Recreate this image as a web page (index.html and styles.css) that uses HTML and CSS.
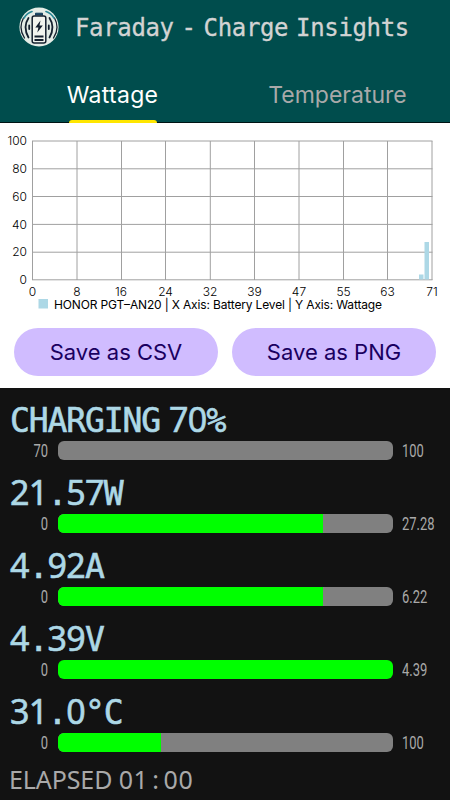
FILE: index.html
```html
<!DOCTYPE html>
<html lang="en">
<head>
<meta charset="utf-8">
<title>Faraday - Charge Insights</title>
<link rel="stylesheet" href="styles.css">
</head>
<body>
<header class="header">
  <div class="brand">
    <svg class="logo" viewBox="0 0 40 40">
      <circle cx="20" cy="20" r="19.6" fill="#e4ece6"/>
      <g fill="none" stroke="#14202e" stroke-width="1.3" stroke-linecap="round">
        <path d="M9.500 11Q3.500 20 9.500 30.500" stroke-width="1.800"/>
        <path d="M30.500 11Q36.500 20 30.500 30.500" stroke-width="1.800"/>
        <path d="M4.500 11Q-1 21 5.500 31"/>
        <path d="M35.500 11Q41 21 34.500 31"/>
        <path d="M10.200 18.500V22M29.800 18.500V22" stroke-width="1.800"/>
        <path d="M5 11Q8 6 13 4.500M35 11Q32 6 27 4.500" stroke="#2b8996" stroke-width="1.700"/>
      </g>
      <path d="M16.500 8.500V6.200H23.500V8.500" fill="#16405e" stroke="#16405e"/>
      <rect x="13.200" y="9" width="13.600" height="27" rx="2" fill="#f2f4ee" stroke="#14202e" stroke-width="1.500"/>
      <path d="M21.500 13.500L16.300 20.500H19.400L18.300 25.500L23.800 18.600H20.500Z" fill="#14202e"/>
      <path d="M15.500 29.500H24.500M15.500 33H24.500" stroke="#14202e" stroke-width="1.800"/>
    </svg>
    <h1 class="title">Faraday - Charge Insights</h1>
  </div>
  <nav class="tabs">
    <div class="tab active"><span>Wattage</span></div>
    <div class="tab temp"><span>Temperature</span></div>
  </nav>
</header>
<main class="panel">
  <svg class="chart" viewBox="0 0 450 192">
    <g class="grid">
      <path d="M32 18H432.500M32 45.800H432.500M32 73.500H432.500M32 101.400H432.500M32 129.200H432.500M32 156.800H432.500"/>
      <path d="M32.500 18V157M77 18V157M121.500 18V157M165.500 18V157M210.300 18V157M254.500 18V157M299 18V157M343.500 18V157M387.500 18V157M432 18V157"/>
    </g>
    <path class="series" d="M419 151.500h4.500v5h-4.500zM424.500 119h4.500v37.500h-4.500z"/>
    <g class="labels yaxis">
      <text x="27" y="22">100</text><text x="27" y="50">80</text><text x="27" y="77.500">60</text>
      <text x="27" y="105.500">40</text><text x="27" y="133">20</text><text x="27" y="161">0</text>
    </g>
    <g class="labels xaxis">
      <text x="32.500" y="172.500">0</text><text x="77" y="172.500">8</text><text x="121" y="172.500">16</text>
      <text x="165.500" y="172.500">24</text><text x="210" y="172.500">32</text><text x="254.500" y="172.500">39</text>
      <text x="299" y="172.500">47</text><text x="343.500" y="172.500">55</text><text x="387.500" y="172.500">63</text>
      <text x="432" y="172.500">71</text>
    </g>
    <rect class="series" x="38.500" y="176" width="9.500" height="9.500"/>
    <text class="labels legend" x="54" y="185.500" textLength="328">HONOR PGT–AN20 | X Axis: Battery Level | Y Axis: Wattage</text>
  </svg>
  <div class="actions">
    <button class="btn"><span>Save as CSV</span></button>
    <button class="btn"><span>Save as PNG</span></button>
  </div>
</main>
<section class="stats">
  <div class="stat">
    <h2 class="value"><span class="word">CHARGING</span> <span class="num">70</span>%</h2>
    <div class="meter"><span class="min">70</span><div class="track"></div><span class="max">100</span></div>
  </div>
  <div class="stat">
    <h2 class="value"><span class="num">21</span>.<span class="num">57</span>W</h2>
    <div class="meter"><span class="min">0</span><div class="track"><div class="fill" style="width:79.2%"></div></div><span class="max">27.28</span></div>
  </div>
  <div class="stat">
    <h2 class="value"><span class="num">4</span>.<span class="num">92</span>A</h2>
    <div class="meter"><span class="min">0</span><div class="track"><div class="fill" style="width:79.2%"></div></div><span class="max">6.22</span></div>
  </div>
  <div class="stat">
    <h2 class="value"><span class="num">4</span>.<span class="num">39</span>V</h2>
    <div class="meter"><span class="min">0</span><div class="track"><div class="fill" style="width:100%"></div></div><span class="max">4.39</span></div>
  </div>
  <div class="stat">
    <h2 class="value"><span class="num">31</span>.<span class="num">0</span>°C</h2>
    <div class="meter"><span class="min">0</span><div class="track"><div class="fill" style="width:31%"></div></div><span class="max">100</span></div>
  </div>
  <p class="elapsed">ELAPSED <span class="clock">01<span class="colon">:</span>00</span></p>
</section>
</body>
</html>
```

FILE: styles.css
```css
* { box-sizing: border-box; margin: 0; }
body { width: 450px; height: 800px; overflow: hidden; background: #121212; font-family: Inter, sans-serif; }
.header { height: 123px; background: #004d4d; border-bottom: 1px solid #001414; display: flex; flex-direction: column; justify-content: space-between; }
.brand { display: flex; align-items: center; height: 54px; padding-left: 18.5px; gap: 16.5px; }
.logo { width: 40px; height: 40px; }
.title { font: 400 24px/30px "DejaVu Sans Mono", monospace; letter-spacing: -0.35px; word-spacing: -6.2px; color: #d3d3d3; white-space: pre; padding-top: 2px; -webkit-text-stroke: .3px #d3d3d3; }
.tabs { display: grid; grid-template-columns: 1fr 1fr; height: 55px; font-size: 23px; line-height: 56px; text-align: center; }
.tab { color: #a9a9a9; }
.tab.active { color: #fff; display: flex; flex-direction: column; align-items: center; justify-content: space-between; letter-spacing: .3px; }
.tab.active span { height: 50px; }
.tab.active::after { content: ""; width: 88px; height: 3.5px; background: #ffe600; border-radius: 3px 3px 0 0; }
.panel { height: 265px; background: #fff; }
.chart { display: block; width: 450px; height: 192px; }
.grid { fill: none; stroke: #a0a0a0; stroke-width: 1; }
.series { fill: #add8e6; }
.labels { font: 300 12px Inter, sans-serif; fill: #000; }
.legend { font-weight: 400; }
.yaxis { text-anchor: end; }
.xaxis { text-anchor: middle; }
.actions { display: flex; gap: 14px; padding: 13px 14px 0; }
.btn { width: 204px; height: 48px; border: 0; border-radius: 24px; background: #d0bcff; color: #1a0060; font: 400 22px/49px Inter, sans-serif; padding: 0; }
.stats { height: 412px; background: #121212; padding-top: 13px; }
.stat { height: 73px; }
.value { height: 40px; padding-left: 10px; font: 400 33px/40px "DejaVu Sans Mono", monospace; letter-spacing: -1.1px; color: #add8e6; white-space: pre; word-spacing: -10px; -webkit-text-stroke: .6px #add8e6; }
.value .num { font-family: "Noto Sans", sans-serif; font-size: 34px; letter-spacing: -0.7px; line-height: 1; }
.meter { display: flex; align-items: center; height: 19px; color: #a9a9a9; font: 400 17.5px/21px Roboto, sans-serif; }
.min { width: 48px; text-align: right; transform: scaleX(.74); transform-origin: right; padding-top: 1px; }
.track { width: 335px; height: 19px; margin: 0 9.5px; background: #808080; border-radius: 6px; overflow: hidden; }
.fill { height: 100%; background: #0f0; }
.max { transform: scaleX(.74); transform-origin: left; padding-top: 1px; }
.elapsed { padding-left: 9px; font: 400 25px/27px "Noto Sans", sans-serif; letter-spacing: -.1px; color: #a9a9a9; white-space: pre; }
.clock { letter-spacing: .6px; }
.colon { display: inline-block; width: 15px; text-align: center; }
```
